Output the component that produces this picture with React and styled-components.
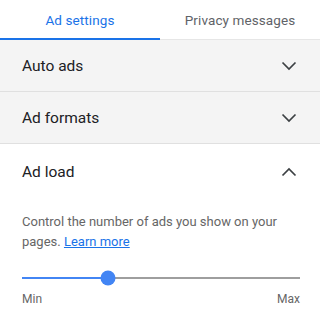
import React from "react";
import styled, { createGlobalStyle } from "styled-components";

const Global = createGlobalStyle`
  html, body { margin: 0; padding: 0; background: #fff; }
  body { width: 320px; height: 317px; overflow: hidden; font-family: Roboto, "Liberation Sans", sans-serif; }
`;

const Page = styled.div`
  width: 320px;
  display: flex;
  flex-direction: column;
`;

const Tabs = styled.div`
  display: grid;
  grid-template-columns: 1fr 1fr;
  height: 40px;
  box-sizing: border-box;
  border-bottom: 1px solid #e6e6e6;
`;

const Tab = styled.div`
  display: flex;
  align-items: center;
  justify-content: center;
  font-family: Roboto, sans-serif;
  font-size: 13.5px;
  font-weight: 400;
  letter-spacing: 0.1px;
  color: ${(p) => (p.$active ? "#1a73e8" : "#5f6368")};
  box-shadow: ${(p) => (p.$active ? "inset 0 -2px 0 #1a73e8" : "none")};
  margin-bottom: -1px;
  padding-bottom: 1px;
`;

const Section = styled.div`
  background: ${(p) => (p.$open ? "#fff" : "#f4f4f4")};
  border-bottom: ${(p) => (p.$open ? "none" : "1px solid #e0e0e0")};
`;

const Header = styled.div`
  height: ${(p) => p.$h}px;
  display: flex;
  align-items: center;
  justify-content: space-between;
  padding: 0 22px;
  font-family: Roboto, sans-serif;
  font-size: 15.5px;
  font-weight: 400;
  color: #202124;
`;

const Chevron = ({ up }) => (
  <svg width="16" height="10" viewBox="0 0 16 10" style={{ marginRight: 1 }}>
    <path
      d={up ? "M1.5 8.5 L8 2 L14.5 8.5" : "M1.5 1.5 L8 8 L14.5 1.5"}
      fill="none"
      stroke="#3c4043"
      strokeWidth="1.7"
    />
  </svg>
);

const Body = styled.div`
  padding: 13px 21px 0 22px;
`;

const Text = styled.p`
  margin: 0;
  font-size: 13px;
  line-height: 20px;
  color: #666;
`;

const Link = styled.a`
  color: #1a73e8;
  text-decoration: underline;
`;

const SliderWrap = styled.div`
  margin-top: 18px;
  position: relative;
  height: 16px;
  display: flex;
  align-items: center;
  margin-right: -1px;
`;

const Track = styled.div`
  flex: 1;
  height: 2px;
  background: #9e9e9e;
  position: relative;
`;

const Fill = styled.div`
  position: absolute;
  left: 0;
  top: 0;
  height: 2px;
  background: #4285f4;
`;

const Thumb = styled.div`
  position: absolute;
  top: 50%;
  width: 15px;
  height: 15px;
  border-radius: 50%;
  background: #4285f4;
  transform: translate(-50%, -50%);
`;

const Labels = styled.div`
  display: flex;
  justify-content: space-between;
  margin-top: 6px;
  font-size: 12px;
  color: #666;
  margin-right: -1px;
`;

export default function App() {
  const pct = 31;
  return (
    <Page>
      <Global />
      <Tabs>
        <Tab $active>Ad settings</Tab>
        <Tab>Privacy messages</Tab>
      </Tabs>
      <Section>
        <Header $h={51}>Auto ads<Chevron /></Header>
      </Section>
      <Section>
        <Header $h={51}>Ad formats<Chevron /></Header>
      </Section>
      <Section $open>
        <Header $h={55}>Ad load<Chevron up /></Header>
        <Body>
          <Text>
            Control the number of ads you show on your pages. <Link>Learn more</Link>
          </Text>
          <SliderWrap>
            <Track>
              <Fill style={{ width: `${pct}%` }} />
              <Thumb style={{ left: `${pct}%` }} />
            </Track>
          </SliderWrap>
          <Labels>
            <span>Min</span>
            <span>Max</span>
          </Labels>
        </Body>
      </Section>
    </Page>
  );
}
